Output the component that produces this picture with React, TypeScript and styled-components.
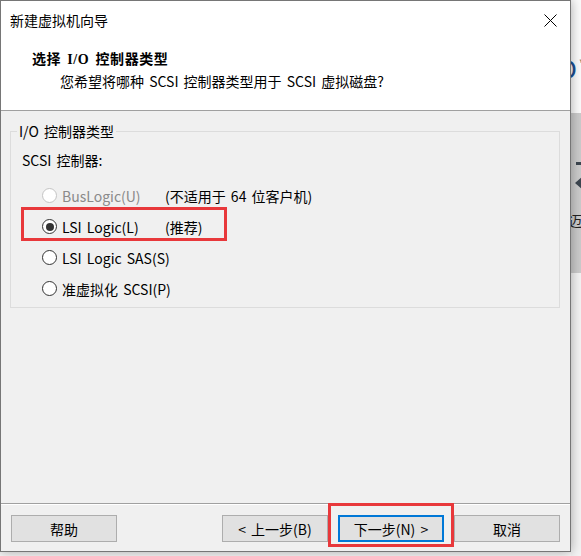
import React from "react";
import styled, { createGlobalStyle } from "styled-components";

const Global = createGlobalStyle`
  html, body { margin: 0; padding: 0; background: #f6f6f6; }
  body {
    width: 581px; height: 556px; overflow: hidden;
    font-family: "Noto Sans CJK SC", sans-serif;
    font-size: 14px; color: #000;
    word-spacing: 2px;
  }
  * { box-sizing: border-box; }
`;

const Desktop = styled.div`
  display: grid;
  grid-template-columns: 571px 10px;
  grid-template-rows: 552px 4px;
  width: 581px;
  height: 556px;
  overflow: hidden;
  background: #f7f7f7;
`;

const BackApp = styled.div`
  grid-column: 2;
  grid-row: 1 / 3;
  display: grid;
  grid-template-rows: 113px 160px 1fr;
  overflow: hidden;
`;

const BackLogo = styled.div`
  background: #fbfbfb;
  display: flex;
  align-items: flex-start;
  padding-top: 55px;
  overflow: hidden;
`;

const LogoMark = styled.span`
  margin-left: -16px;
  font-family: "Liberation Sans", sans-serif;
  font-size: 28px;
  font-weight: 400;
  line-height: 30px;
  color: #1d4f91;
  white-space: nowrap;
`;

const LogoTm = styled.span`
  margin: 3px 0 0 2px;
  font-family: "Liberation Sans", sans-serif;
  font-size: 8px;
  line-height: 10px;
  color: #222;
`;

const BackBand = styled.div`
  background: #cbcbcb;
  display: flex;
  flex-direction: column;
  overflow: hidden;
  padding-top: 49px;
`;

const BandDash = styled.div`
  margin-left: 5px;
  width: 6px;
  height: 3px;
  background: #3d4650;
`;

const BandArrow = styled.div`
  margin-top: 12px;
  margin-left: 4px;
  width: 0;
  height: 0;
  border-top: 6px solid transparent;
  border-bottom: 6px solid transparent;
  border-right: 7px solid #3d4650;
`;

const BandText = styled.span`
  margin-top: 22px;
  margin-left: -3px;
  font-size: 14px;
  line-height: 18px;
  color: #222;
  white-space: nowrap;
`;

const BackRest = styled.div`
  background: #f3f3f3;
`;

const Dialog = styled.div`
  grid-column: 1;
  grid-row: 1;
  position: relative;
  z-index: 1;
  width: 571px;
  height: 552px;
  border: 1px solid #767676;
  background: #f0f0f0;
  box-shadow: 0 0 11px rgba(0, 0, 0, 0.33);
  display: flex;
  flex-direction: column;
`;

const Header = styled.div`
  height: 110px;
  background: #fff;
  border-bottom: 1px solid #a0a0a0;
  display: flex;
  flex-direction: column;
`;

const TitleBar = styled.div`
  height: 38px;
  display: flex;
  align-items: center;
  justify-content: space-between;
  padding-left: 9px;
`;

const TitleText = styled.span`
  font-size: 14px;
  line-height: 20px;
`;

const CloseButton = styled.button`
  width: 40px;
  height: 38px;
  border: 0;
  background: transparent;
  display: flex;
  align-items: center;
  justify-content: center;
  padding: 0;
`;

const Heading = styled.div`
  margin-top: 11px;
  padding-left: 31px;
  font-family: "Liberation Serif", "Noto Sans CJK SC", serif;
  font-weight: 700;
  font-size: 14px;
  line-height: 20px;
  letter-spacing: 0.6px;
`;

const Subtitle = styled.div`
  margin-top: 1px;
  padding-left: 59px;
  font-size: 14px;
  line-height: 20px;
`;

const Body = styled.div`
  flex: 1;
  padding: 10px 10px 0 9px;
`;

const GroupBox = styled.fieldset`
  margin: 0;
  padding: 0 0 3px 0;
  border: 1px solid #dcdcdc;
  min-width: 0;
`;

const GroupLegend = styled.legend`
  margin-left: 6px;
  padding: 0 2px;
  font-size: 14px;
  line-height: 20px;
`;

const FieldLabel = styled.div`
  margin: 9px 0 0 11px;
  font-size: 14px;
  line-height: 20px;
`;

const RadioList = styled.div`
  margin: 10px 0 0 12px;
  display: flex;
  flex-direction: column;
`;

const Row = styled.label<{ $disabled?: boolean; $callout?: boolean }>`
  position: relative;
  height: 31px;
  width: ${(p) => (p.$callout ? "201px" : "fit-content")};
  padding-left: 19px;
  display: grid;
  grid-template-columns: 15px 98px auto;
  column-gap: 5px;
  align-items: center;
  color: ${(p) => (p.$disabled ? "#8a8a8a" : "#000")};
  font-size: 14px;
  line-height: 20px;
  white-space: nowrap;
  &::after {
    content: "";
    display: ${(p) => (p.$callout ? "block" : "none")};
    position: absolute;
    left: -2px;
    right: -3px;
    top: -4px;
    bottom: 1px;
    border: 3px solid #e8383b;
    pointer-events: none;
  }
`;

const Note = styled.span`
  color: #000;
`;

const RadioDot = styled.span<{ $checked?: boolean; $disabled?: boolean }>`
  width: 15px;
  height: 15px;
  border-radius: 50%;
  border: 1px solid ${(p) => (p.$disabled ? "#c4c4c4" : "#333")};
  background: #fff;
  display: flex;
  align-items: center;
  justify-content: center;
  &::after {
    content: "";
    display: ${(p) => (p.$checked ? "block" : "none")};
    width: 8px;
    height: 8px;
    border-radius: 50%;
    background: #333;
  }
`;

const Footer = styled.div`
  height: 48px;
  border-top: 1px solid #a0a0a0;
  box-shadow: inset 0 1px 0 #fff;
  padding: 11px 10px 0 10px;
  display: flex;
  align-items: flex-start;
`;

const Spacer = styled.div`
  flex: 1;
`;

const ButtonGroup = styled.div`
  display: flex;
  gap: 10px;
`;

const Button = styled.button<{ $default?: boolean }>`
  position: relative;
  width: 106px;
  height: 27px;
  padding: 0;
  background: #e1e1e1;
  border: ${(p) => (p.$default ? "2px solid #0078d7" : "1px solid #adadad")};
  font-family: "Noto Sans CJK SC", sans-serif;
  font-size: 14px;
  line-height: 20px;
  word-spacing: 2px;
  color: #000;
`;

const Callout = styled.span`
  position: absolute;
  left: -12px;
  right: -12px;
  top: -14px;
  bottom: -7px;
  border: 3px solid #e8383b;
  pointer-events: none;
`;

function CloseIcon() {
  return (
    <svg width="13" height="13" viewBox="0 0 13 13">
      <path d="M0.5 0.5 L12.5 12.5 M12.5 0.5 L0.5 12.5" stroke="#000" strokeWidth="1" fill="none" />
    </svg>
  );
}

const options = [
  { label: "BusLogic(U)", note: "(不适用于 64 位客户机)", disabled: true },
  { label: "LSI Logic(L)", note: "(推荐)", checked: true, callout: true },
  { label: "LSI Logic SAS(S)" },
  { label: "准虚拟化 SCSI(P)" },
];

export default function App() {
  return (
    <>
      <Global />
      <Desktop>
        <Dialog>
          <Header>
            <TitleBar>
              <TitleText>新建虚拟机向导</TitleText>
              <CloseButton aria-label="关闭">
                <CloseIcon />
              </CloseButton>
            </TitleBar>
            <Heading>选择 I/O 控制器类型</Heading>
            <Subtitle>您希望将哪种 SCSI 控制器类型用于 SCSI 虚拟磁盘?</Subtitle>
          </Header>
          <Body>
            <GroupBox>
              <GroupLegend>I/O 控制器类型</GroupLegend>
              <FieldLabel>SCSI 控制器:</FieldLabel>
              <RadioList>
                {options.map((o) => (
                  <Row key={o.label} $disabled={o.disabled} $callout={o.callout}>
                    <RadioDot $checked={o.checked} $disabled={o.disabled} />
                    <span>{o.label}</span>
                    {o.note ? <Note>{o.note}</Note> : <span />}
                  </Row>
                ))}
              </RadioList>
            </GroupBox>
          </Body>
          <Footer>
            <Button>帮助</Button>
            <Spacer />
            <ButtonGroup>
              <Button>&lt; 上一步(B)</Button>
              <Button $default>
                下一步(N) &gt;
                <Callout />
              </Button>
              <Button>取消</Button>
            </ButtonGroup>
          </Footer>
        </Dialog>
        <BackApp>
          <BackLogo>
            <LogoMark>O</LogoMark>
            <LogoTm>™</LogoTm>
          </BackLogo>
          <BackBand>
            <BandDash />
            <BandArrow />
            <BandText>迈</BandText>
          </BackBand>
          <BackRest />
        </BackApp>
      </Desktop>
    </>
  );
}
